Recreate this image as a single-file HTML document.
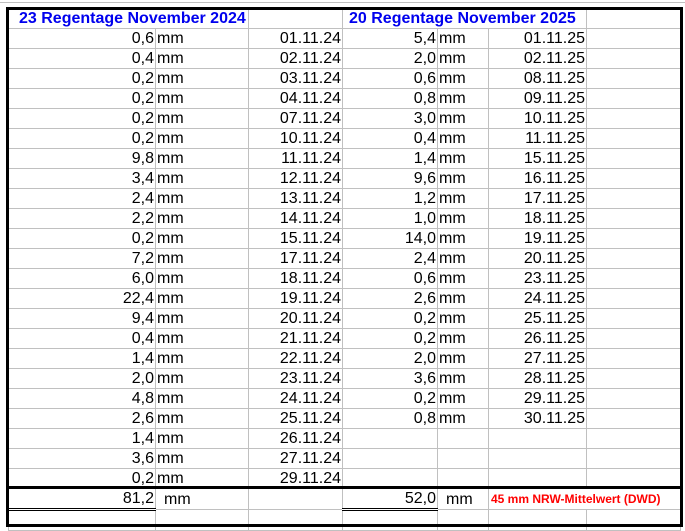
<!DOCTYPE html>
<html><head><meta charset="utf-8"><style>
body{margin:0;width:685px;height:530px;background:#fff;position:relative;overflow:hidden;font-family:"Liberation Sans",Arial,sans-serif;}
table{position:absolute;left:8px;top:8px;border-collapse:collapse;table-layout:fixed;font-size:16px;}
td{border:1px solid #c0c0c0;height:19px;padding:0 1px;line-height:19px;white-space:nowrap;overflow:visible;}
td.r{text-align:right}
td.h{color:#0000ee;font-weight:bold;font-size:16px;}
.box{position:absolute;border:3px solid #000;box-sizing:border-box;}
</style></head><body>
<div style="position:absolute;left:0;top:2px;width:685px;height:1px;background:#c0c0c0"></div>
<table>
<colgroup><col style="width:147px"><col style="width:93px"><col style="width:94px"><col style="width:95px"><col style="width:51px"><col style="width:98px"><col style="width:94px"></colgroup>
<tr><td class="h" colspan="2" style="padding-left:10px">23 Regentage November 2024</td><td></td><td class="h" colspan="3" style="padding-left:6px">20 Regentage November 2025</td><td></td></tr>
<tr><td class="r">0,6</td><td>mm</td><td class="r">01.11.24</td><td class="r">5,4</td><td>mm</td><td class="r">01.11.25</td><td></td></tr>
<tr><td class="r">0,4</td><td>mm</td><td class="r">02.11.24</td><td class="r">2,0</td><td>mm</td><td class="r">02.11.25</td><td></td></tr>
<tr><td class="r">0,2</td><td>mm</td><td class="r">03.11.24</td><td class="r">0,6</td><td>mm</td><td class="r">08.11.25</td><td></td></tr>
<tr><td class="r">0,2</td><td>mm</td><td class="r">04.11.24</td><td class="r">0,8</td><td>mm</td><td class="r">09.11.25</td><td></td></tr>
<tr><td class="r">0,2</td><td>mm</td><td class="r">07.11.24</td><td class="r">3,0</td><td>mm</td><td class="r">10.11.25</td><td></td></tr>
<tr><td class="r">0,2</td><td>mm</td><td class="r">10.11.24</td><td class="r">0,4</td><td>mm</td><td class="r">11.11.25</td><td></td></tr>
<tr><td class="r">9,8</td><td>mm</td><td class="r">11.11.24</td><td class="r">1,4</td><td>mm</td><td class="r">15.11.25</td><td></td></tr>
<tr><td class="r">3,4</td><td>mm</td><td class="r">12.11.24</td><td class="r">9,6</td><td>mm</td><td class="r">16.11.25</td><td></td></tr>
<tr><td class="r">2,4</td><td>mm</td><td class="r">13.11.24</td><td class="r">1,2</td><td>mm</td><td class="r">17.11.25</td><td></td></tr>
<tr><td class="r">2,2</td><td>mm</td><td class="r">14.11.24</td><td class="r">1,0</td><td>mm</td><td class="r">18.11.25</td><td></td></tr>
<tr><td class="r">0,2</td><td>mm</td><td class="r">15.11.24</td><td class="r">14,0</td><td>mm</td><td class="r">19.11.25</td><td></td></tr>
<tr><td class="r">7,2</td><td>mm</td><td class="r">17.11.24</td><td class="r">2,4</td><td>mm</td><td class="r">20.11.25</td><td></td></tr>
<tr><td class="r">6,0</td><td>mm</td><td class="r">18.11.24</td><td class="r">0,6</td><td>mm</td><td class="r">23.11.25</td><td></td></tr>
<tr><td class="r">22,4</td><td>mm</td><td class="r">19.11.24</td><td class="r">2,6</td><td>mm</td><td class="r">24.11.25</td><td></td></tr>
<tr><td class="r">9,4</td><td>mm</td><td class="r">20.11.24</td><td class="r">0,2</td><td>mm</td><td class="r">25.11.25</td><td></td></tr>
<tr><td class="r">0,4</td><td>mm</td><td class="r">21.11.24</td><td class="r">0,2</td><td>mm</td><td class="r">26.11.25</td><td></td></tr>
<tr><td class="r">1,4</td><td>mm</td><td class="r">22.11.24</td><td class="r">2,0</td><td>mm</td><td class="r">27.11.25</td><td></td></tr>
<tr><td class="r">2,0</td><td>mm</td><td class="r">23.11.24</td><td class="r">3,6</td><td>mm</td><td class="r">28.11.25</td><td></td></tr>
<tr><td class="r">4,8</td><td>mm</td><td class="r">24.11.24</td><td class="r">0,2</td><td>mm</td><td class="r">29.11.25</td><td></td></tr>
<tr><td class="r">2,6</td><td>mm</td><td class="r">25.11.24</td><td class="r">0,8</td><td>mm</td><td class="r">30.11.25</td><td></td></tr>
<tr><td class="r">1,4</td><td>mm</td><td class="r">26.11.24</td><td></td><td></td><td></td><td></td></tr>
<tr><td class="r">3,6</td><td>mm</td><td class="r">27.11.24</td><td></td><td></td><td></td><td></td></tr>
<tr><td class="r">0,2</td><td>mm</td><td class="r">29.11.24</td><td></td><td></td><td></td><td></td></tr>
<tr><td class="r" style="border-bottom:3px double #000">81,2</td><td style="padding-left:8px">mm</td><td></td><td class="r" style="border-bottom:3px double #000">52,0</td><td style="padding-left:8px">mm</td><td colspan="2" style="color:#ff0000;font-weight:bold;font-size:12px;padding-left:2px">45 mm NRW-Mittelwert (DWD)</td></tr>
<tr><td style="height:16px"></td><td></td><td></td><td></td><td></td><td></td><td></td></tr>
</table>
<div class="box" style="left:6px;top:7px;width:677px;height:520px;"></div>
<div style="position:absolute;left:6px;top:486px;width:677px;height:3px;background:#000"></div>
</body></html>
